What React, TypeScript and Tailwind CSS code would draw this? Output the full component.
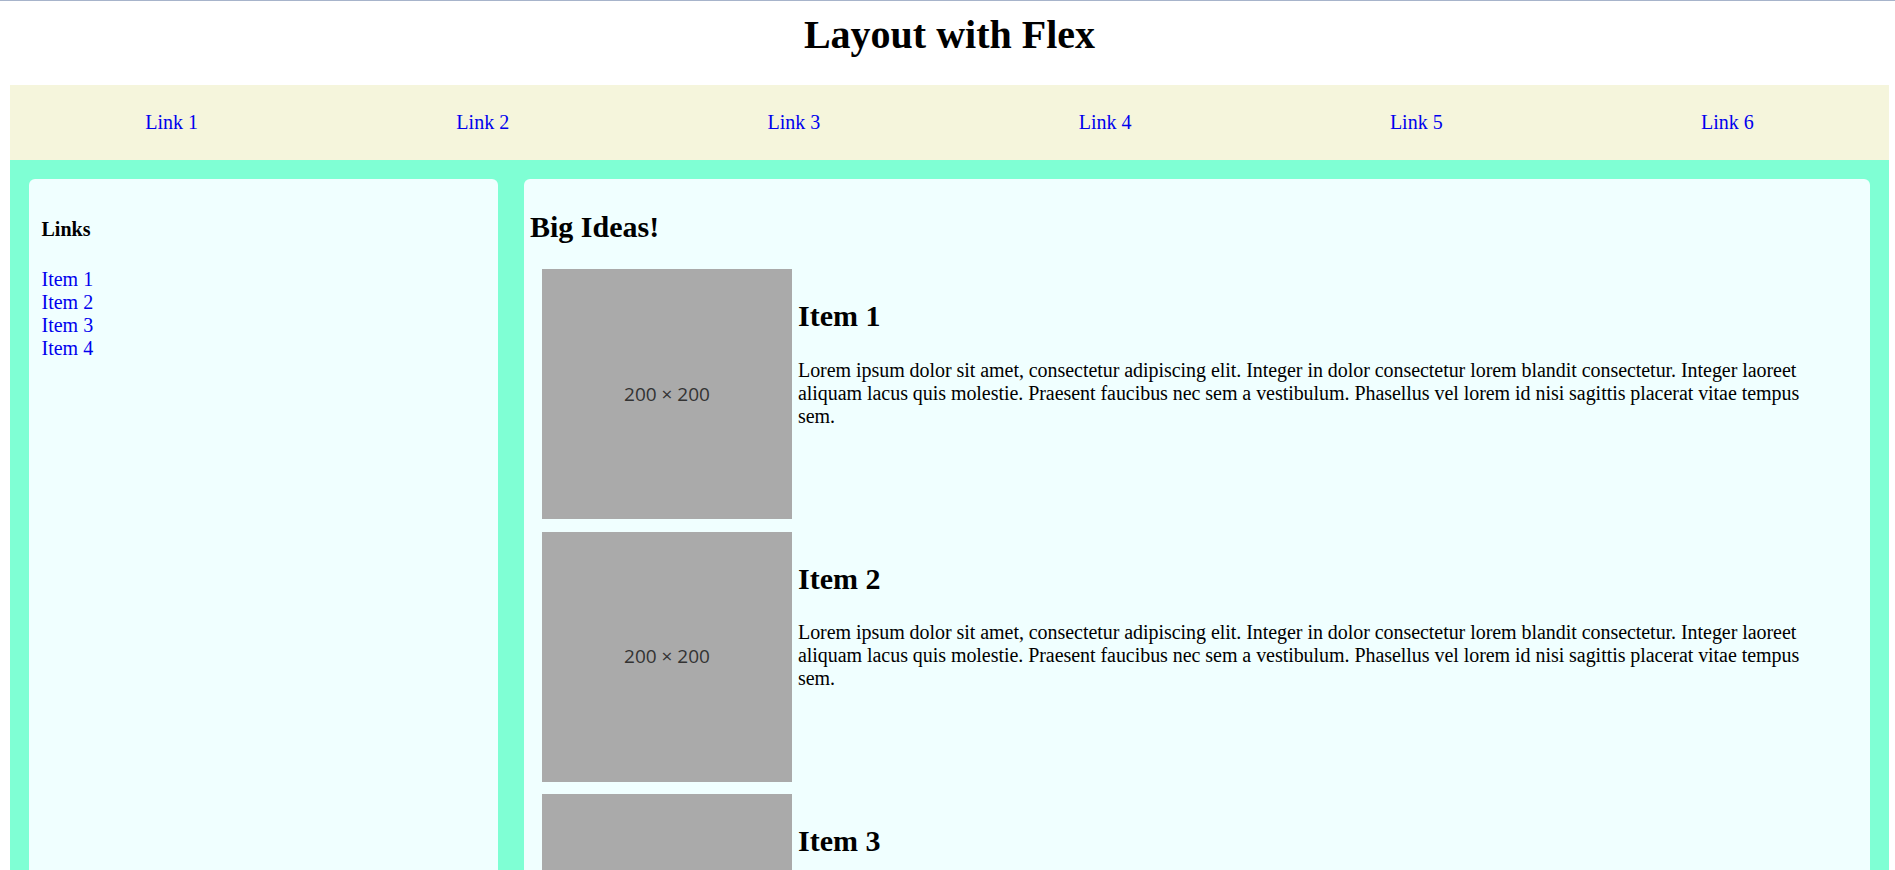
import React from "react";

const serif = { fontFamily: '"Liberation Serif", "Times New Roman", serif' };

const lorem =
  "Lorem ipsum dolor sit amet, consectetur adipiscing elit. Integer in dolor consectetur lorem blandit consectetur. Integer laoreet aliquam lacus quis molestie. Praesent faucibus nec sem a vestibulum. Phasellus vel lorem id nisi sagittis placerat vitae tempus sem.";

function Placeholder() {
  return (
    <div
      className="w-[250px] h-[250px] shrink-0 bg-[#aaaaaa] flex items-center justify-center text-[19px] text-[#333333]"
      style={{ fontFamily: '"Open Sans", "Noto Sans", sans-serif' }}
    >
      200 × 200
    </div>
  );
}

function Article({ title }: { title: string }) {
  return (
    <div className="flex ml-[12px]">
      <Placeholder />
      <div className="flex-1 pl-[6px] pr-[37px] pt-[30px]">
        <h2 className="text-[30px] font-bold leading-[34.5px] mb-[25px]">{title}</h2>
        <p className="text-[20px] leading-[23px] tracking-[-0.05px]">{lorem}</p>
      </div>
    </div>
  );
}

export default function App() {
  const links = ["Link 1", "Link 2", "Link 3", "Link 4", "Link 5", "Link 6"];
  return (
    <div className="min-h-screen bg-white text-black border-t border-[#a7b4cb]" style={serif}>
      <h1 className="text-center text-[40px] font-bold leading-[46px] mt-[11px] mb-[27px] ml-[10px] w-[1879px]">
        Layout with Flex
      </h1>
      <nav className="ml-[10px] w-[1879px] h-[75px] bg-[#f5f5dc] flex items-center px-[6px] pt-[2px]">
        {links.map((l) => (
          <div key={l} className="flex-1 text-center">
            <a href="#" className="text-[20px] leading-[23px] text-[#0000ee] no-underline">
              {l}
            </a>
          </div>
        ))}
      </nav>
      <div className="ml-[10px] w-[1879px] bg-[#7fffd4] p-[19px] flex gap-[26px]">
        <aside className="w-[469px] shrink-0 bg-[#f0ffff] rounded-[6px] p-[12.5px]">
          <h4 className="text-[20px] font-bold leading-[23px] mt-[26.5px] mb-[27px]">Links</h4>
          <ul className="list-none p-0 m-0">
            {["Item 1", "Item 2", "Item 3", "Item 4"].map((i) => (
              <li key={i} className="text-[20px] leading-[23px]">
                <a href="#" className="text-[#0000ee] no-underline">
                  {i}
                </a>
              </li>
            ))}
          </ul>
        </aside>
        <main className="flex-1 bg-[#f0ffff] rounded-[6px] pt-[6px] px-[6px] pb-[12px]">
          <h2 className="text-[30px] font-bold leading-[34.5px] mt-[24.5px] mb-[25px]">Big Ideas!</h2>
          <div className="flex flex-col gap-[12.5px]">
            <Article title="Item 1" />
            <Article title="Item 2" />
            <Article title="Item 3" />
          </div>
        </main>
      </div>
    </div>
  );
}
